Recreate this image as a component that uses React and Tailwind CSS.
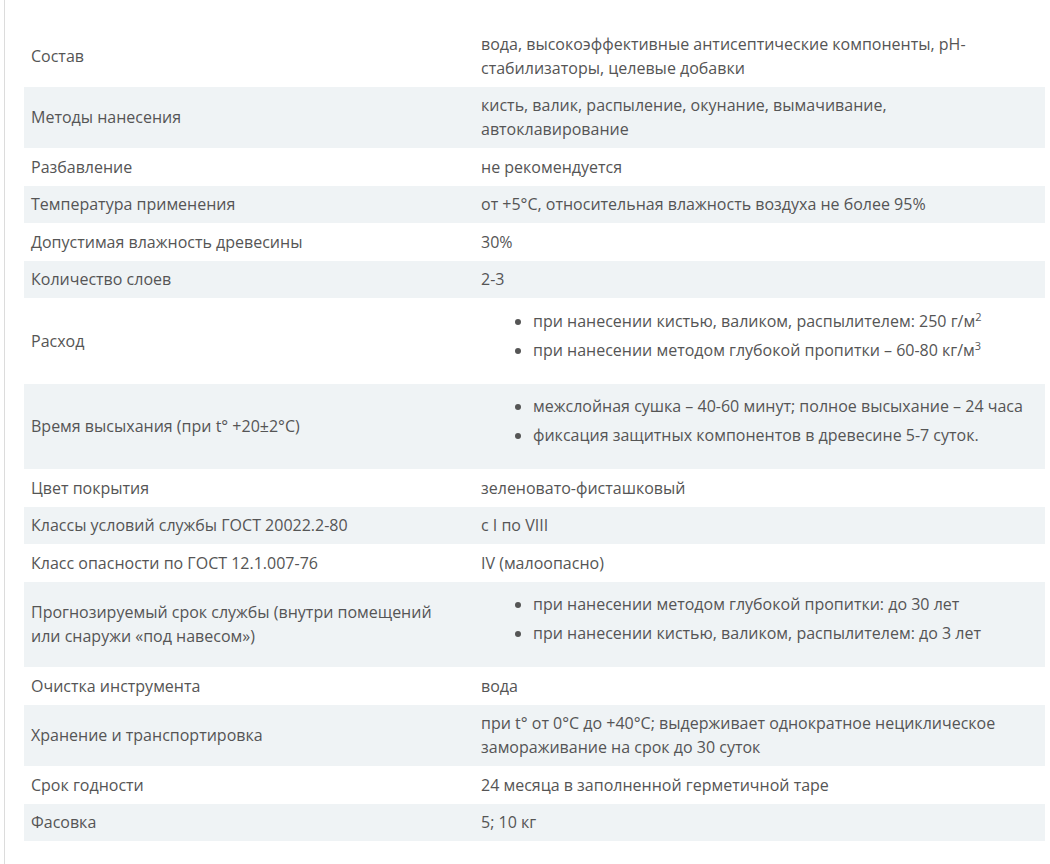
import React from "react";

const rows = [
  { k: "Состав", v: "вода, высокоэффективные антисептические компоненты, pH-стабилизаторы, целевые добавки" },
  { k: "Методы нанесения", v: "кисть, валик, распыление, окунание, вымачивание, автоклавирование" },
  { k: "Разбавление", v: "не рекомендуется" },
  { k: "Температура применения", v: "от +5°C, относительная влажность воздуха не более 95%" },
  { k: "Допустимая влажность древесины", v: "30%" },
  { k: "Количество слоев", v: "2-3" },
  {
    k: "Расход",
    list: [
      <>при нанесении кистью, валиком, распылителем: 250 г/м<sup className="text-[11px]">2</sup></>,
      <>при нанесении методом глубокой пропитки – 60-80 кг/м<sup className="text-[11px]">3</sup></>,
    ],
  },
  {
    k: "Время высыхания (при t° +20±2°C)",
    list: ["межслойная сушка – 40-60 минут; полное высыхание – 24 часа", "фиксация защитных компонентов в древесине 5-7 суток."],
  },
  { k: "Цвет покрытия", v: "зеленовато-фисташковый" },
  { k: "Классы условий службы ГОСТ 20022.2-80", v: "с I по VIII" },
  { k: "Класс опасности по ГОСТ 12.1.007-76", v: "IV (малоопасно)" },
  {
    k: "Прогнозируемый срок службы (внутри помещений или снаружи «под навесом»)",
    list: ["при нанесении методом глубокой пропитки: до 30 лет", "при нанесении кистью, валиком, распылителем: до 3 лет"],
  },
  { k: "Очистка инструмента", v: "вода" },
  { k: "Хранение и транспортировка", v: "при t° от 0°C до +40°C; выдерживает однократное нециклическое замораживание на срок до 30 суток" },
  { k: "Срок годности", v: "24 месяца в заполненной герметичной таре" },
  { k: "Фасовка", v: "5; 10 кг" },
];

export default function App() {
  return (
    <div
      className="min-h-[864px] w-[1050px] bg-white text-[#555] text-[16px] leading-[24px]"
      style={{ fontFamily: '"Open Sans", "Noto Sans", sans-serif' }}
    >
      <div className="ml-[4px] min-h-[864px] border-l border-[#dcdcdc] pl-[19px] pt-[25px]">
        <table className="w-[1021px] border-collapse">
          <tbody>
            {rows.map((r, i) => (
              <tr key={i} className={i % 2 === 1 ? "bg-[#eff3f5]" : "bg-white"}>
                <td className="w-[450px] pl-[7px] pr-[20px] py-[6.75px] align-middle">{r.k}</td>
                <td className="px-[7px] py-[6.75px] align-middle">
                  {r.list ? (
                    <ul className="list-disc pl-[52px] pt-[4px] pb-[10px]">
                      {r.list.map((it, j) => (
                        <li key={j} className="mb-[5px]">
                          {it}
                        </li>
                      ))}
                    </ul>
                  ) : (
                    r.v
                  )}
                </td>
              </tr>
            ))}
          </tbody>
        </table>
      </div>
    </div>
  );
}
